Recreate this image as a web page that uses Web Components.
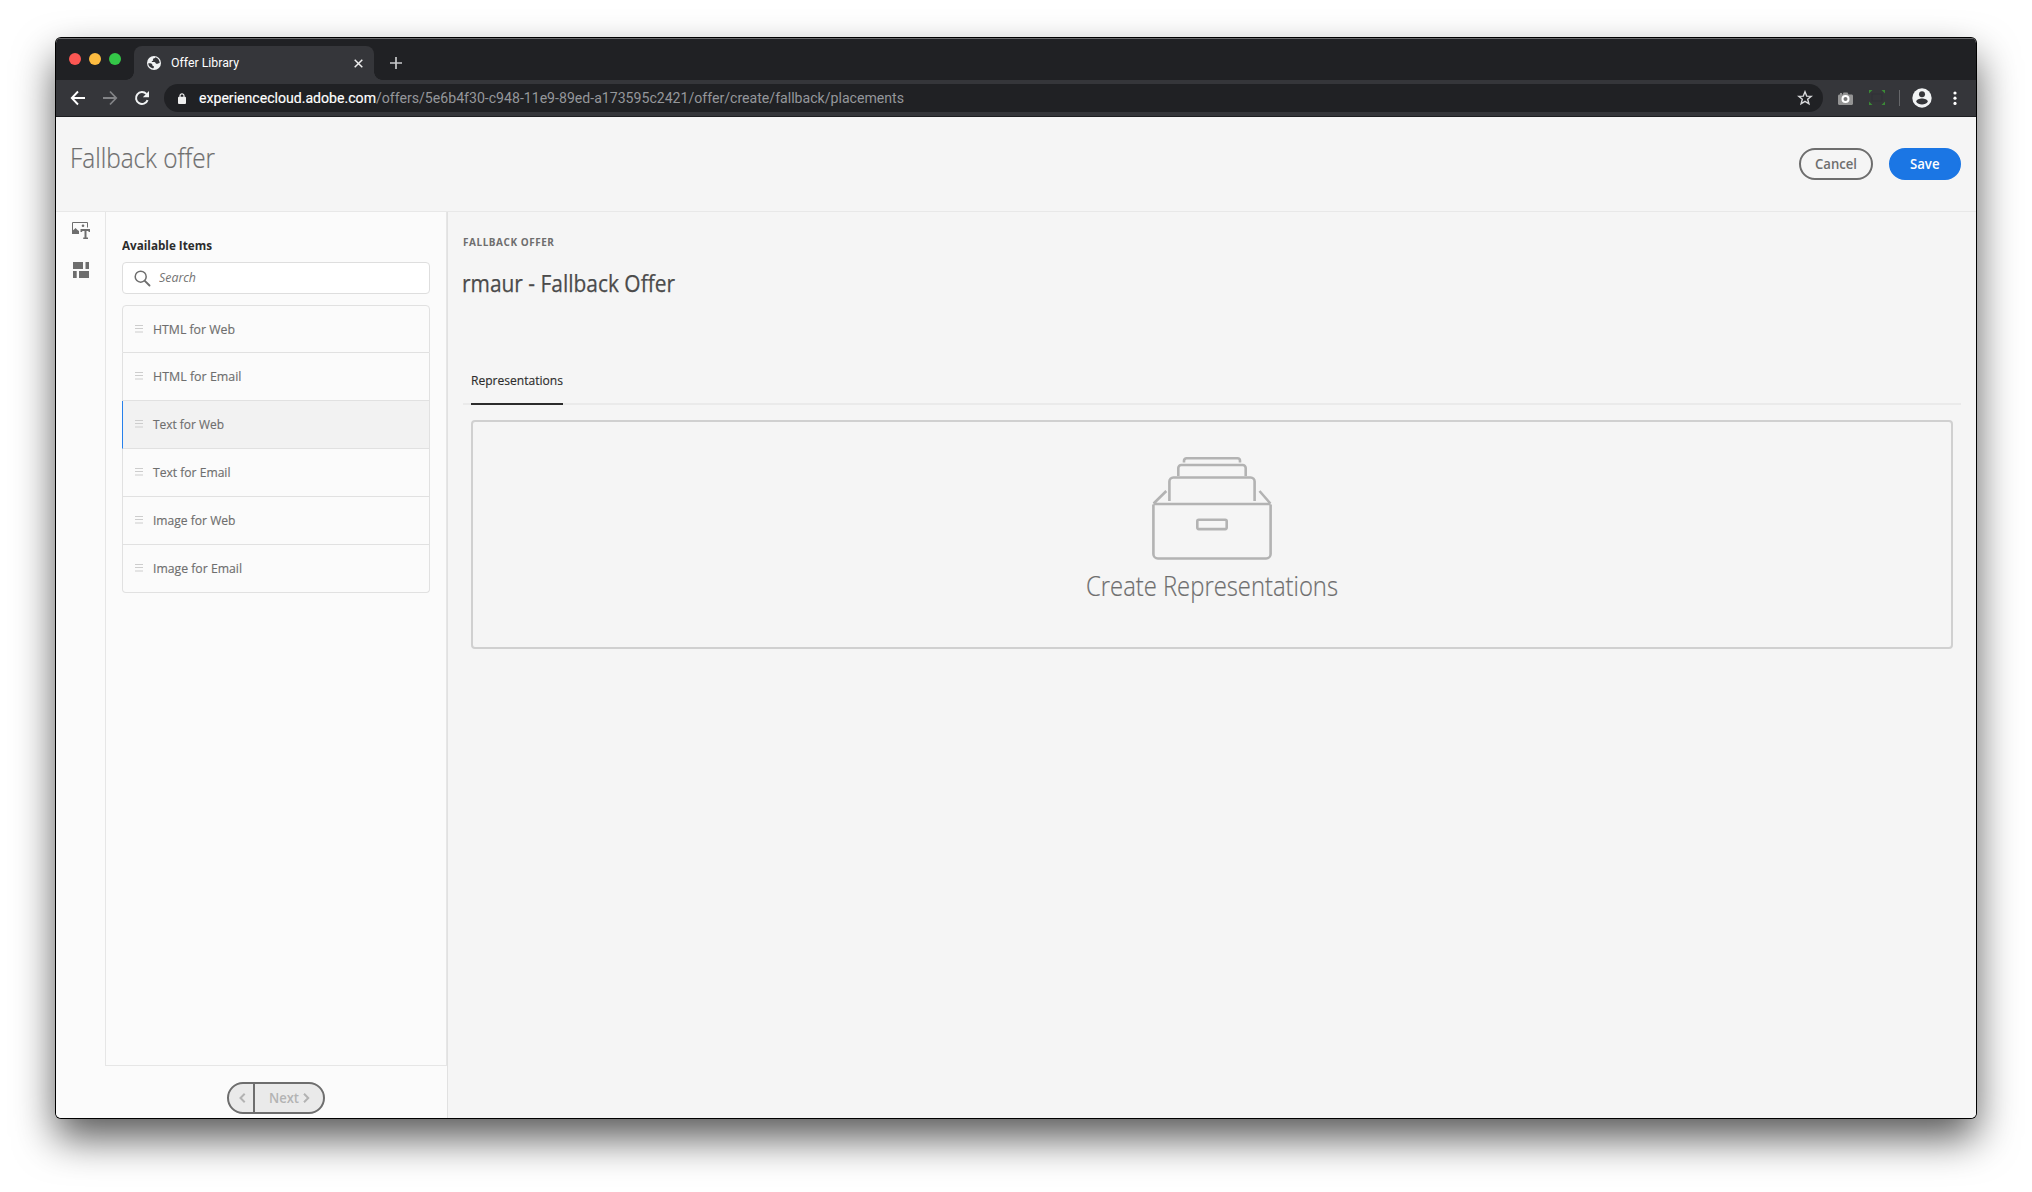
<!DOCTYPE html>
<html lang="en">
<head>
<meta charset="utf-8">
<title>Offer Library</title>
<style>
html,body{margin:0;height:100%;background:#fff;overflow:hidden}
body{font-family:"Open Sans","Noto Sans",sans-serif;font-size:13px;color:#6e6e6e}
</style>
</head>
<body>
<app-window>
  <browser-chrome slot="chrome"></browser-chrome>
  <offer-page></offer-page>
</app-window>
<script>
const define = (name, html, setup) => customElements.define(name, class extends HTMLElement {
  constructor() {
    super();
    const t = document.createElement('template');
    t.innerHTML = html;
    this.attachShadow({mode: 'open'}).append(t.content.cloneNode(true));
  }
  connectedCallback() { if (setup) setup.call(this, this.shadowRoot); }
});

/* One line of text condensed to an exact advance width. */
define('fit-text', `<style>
:host{display:block;flex:none;white-space:nowrap;line-height:20px}
span{display:inline-block;transform-origin:0 50%}
</style><span><slot></slot></span>`, function (root) {
  const w = +this.getAttribute('w');
  const s = root.querySelector('span');
  this.style.width = w + 'px';
  s.style.transform = `scaleX(${w / s.getBoundingClientRect().width})`;
});

define('drag-handle', `<style>:host{display:block;width:8px;height:8px}svg{display:block}</style>
<svg width="8" height="8"><path d="M0 .5h8M0 3.500h8M0 7h8" stroke="#cdcdcd" stroke-width="1.200"/></svg>`);

customElements.define('placement-item', class extends HTMLElement {
  connectedCallback() {
    const root = this.attachShadow({mode: 'open'});
    root.innerHTML = `<style>
:host{display:flex;align-items:center;box-sizing:border-box;height:48px;padding:0 0 2px 12px;gap:10px;border:1px solid #e1e1e1;border-top:0}
:host([first]){padding-bottom:0;border-top:1px solid #e1e1e1;border-radius:4px 4px 0 0}
:host([last]){border-radius:0 0 4px 4px}
:host([selected]){background:#f2f2f2;border-left-color:#2680eb}
fit-text{-webkit-text-stroke:.15px}
</style><drag-handle></drag-handle><fit-text w="${this.getAttribute('w')}">${this.getAttribute('label')}</fit-text>`;
  }
});

define('app-window', `<style>
:host{display:flex;flex-direction:column;width:1920px;height:1080px;margin:38px 56px;border-radius:5px;background:#f5f5f5;
 box-shadow:0 0 0 1px #000,0 20px 40px rgba(0,0,0,.66)}
.clip{display:flex;flex-direction:column;height:1080px;border-radius:5px;overflow:hidden}
</style><div class="clip"><slot name="chrome"></slot><slot></slot></div>`);

define('browser-chrome', `<style>
:host{display:block;height:79px;background:#202124;color:#fff;font-family:Roboto,Inter,sans-serif}
svg{display:block;flex:none}
.strip{display:flex;height:42px;box-sizing:border-box;box-shadow:inset 0 1px #6b6b6d}
.lights{display:flex;gap:8px;padding:15px 0 0 13px;width:65px}
.lights i{width:12px;height:12px;border-radius:50%}
.tab{display:flex;align-items:center;box-sizing:border-box;width:240px;height:34px;margin-top:8px;background:#35363a;border-radius:8px 8px 0 0;padding:0 11.500px 0 13px;position:relative}
.tab:before,.tab:after{content:"";position:absolute;bottom:0;width:8px;height:8px}
.tab:before{left:-8px;background:radial-gradient(circle at 0 0,transparent 7.5px,#35363a 8px)}
.tab:after{right:-8px;background:radial-gradient(circle at 100% 0,transparent 7.5px,#35363a 8px)}
.tab fit-text{margin-left:9.500px;font-size:12px}
.x{margin-left:auto}
.plus{margin:19px 0 0 16px}
.bar{display:flex;align-items:center;height:37px;box-sizing:border-box;background:#35363a;border-bottom:1px solid #1d1e21;padding-left:14px}
.nav{display:flex;gap:16px;width:94px}
.url{display:flex;align-items:center;width:1659px;height:28px;box-sizing:border-box;border-radius:14px;background:#202124;padding:0 10px 0 14px;font-size:14px}
.url .d{margin-left:12.500px;-webkit-text-stroke:.15px}
.url .p{color:#95979b}
.url svg:last-child{margin-left:auto}
.sep{width:1px;height:16px;background:#66676a;margin:0 12px 0 14px}
</style>
<div class="strip">
 <div class="lights"><i style="background:#fc5753"></i><i style="background:#fdbc40"></i><i style="background:#34c748"></i></div>
 <div class="tab">
  <svg width="14" height="14" viewBox="0 0 14 14"><circle cx="7" cy="7" r="7" fill="#f1f3f4"/><path d="M1.300 7.200c1 .1 2.900-.1 3.700.7.600.7 0 1.500.8 1.900.8.300 1.300.7 1.100 1.500-.1.400-.300.700-.500 1C3.500 12 1.300 9.900 1.300 7.200zM8.300 1.300c-.1 1-.8 1.100-1.700 1.200-.9.200-.8 1.100-.4 1.500.3.400-.3.900-.9.900-.8.100-.7 1 .1 1.100 1.100.1 2.700-.1 3.200.9.300.8 1.100.9 2 .8.800-.1 1.400-.5 2.100-.6C12.600 4.200 10.900 1.900 8.300 1.300z" fill="#35363a"/></svg>
  <fit-text w="68">Offer Library</fit-text>
  <svg class="x" width="9" height="9" viewBox="0 0 9 9"><path d="M.7.7l7.600 7.600M8.300.7L.7 8.300" stroke="#eee" stroke-width="1.500"/></svg>
 </div>
 <svg class="plus" width="12" height="12" viewBox="0 0 12 12"><path d="M6 0v12M0 6h12" stroke="#c8c9cb" stroke-width="1.700"/></svg>
</div>
<div class="bar">
 <div class="nav">
  <svg width="16" height="16" viewBox="0 0 16 16"><path d="M15 8H2.200M8 1.500L1.800 8 8 14.500" fill="none" stroke="#fff" stroke-width="1.900"/></svg>
  <svg width="16" height="16" viewBox="0 0 16 16"><path d="M1 8h12.800M8 1.500L14.200 8 8 14.500" fill="none" stroke="#828386" stroke-width="1.800"/></svg>
  <svg width="16" height="16" viewBox="0 0 16 16"><path d="M13.600 10.200A6 6 0 1 1 12.400 3.900" fill="none" stroke="#f1f3f4" stroke-width="2"/><path d="M15 1v6.200H8.800z" fill="#f1f3f4"/></svg>
 </div>
 <div class="url">
  <svg width="8" height="11" viewBox="0 0 8 11"><rect y="3.800" width="8" height="7.200" rx="1" fill="#eee"/><path d="M2 4.500V2.800a2 2 0 0 1 4 0v1.700" fill="none" stroke="#eee" stroke-width="1.200"/></svg>
  <fit-text class="d" w="177">experiencecloud.adobe.com</fit-text><fit-text class="p" w="528">/offers/5e6b4f30-c948-11e9-89ed-a173595c2421/offer/create/fallback/placements</fit-text>
  <svg width="16" height="16" viewBox="0 0 16 16"><path d="M8 1.800l1.700 4.300 4.500.3-3.500 2.900 1.200 4.500L8 11.300l-3.900 2.500 1.200-4.500-3.500-2.900 4.500-.3z" fill="none" stroke="#d6d7d9" stroke-width="1.400"/></svg>
 </div>
 <svg width="15" height="13" viewBox="0 0 15 13" style="margin:1px 0 0 14.500px"><path d="M1.500 2.500H2V1h2v1.500h.7L5.500.500h4l1 2h3c.900 0 1.500.6 1.500 1.400v7.600c0 .900-.6 1.500-1.500 1.500h-12C.6 13 0 12.400 0 11.500V4c0-.9.6-1.500 1.500-1.500z" fill="#949494"/><circle cx="7.500" cy="7" r="3" fill="#777" stroke="#fff" stroke-width="2"/></svg>
 <svg width="16" height="15" viewBox="0 0 16 15" style="margin:0 0 1px 16.500px"><rect x="3" y="4" width="10" height="7" fill="none" stroke="#303136"/><path d="M0 0h3.500L0 3.500zM16 0v3.500L12.500 0zM0 15v-3.500L3.500 15zM16 15h-3.500l3.500-3.500z" fill="#3b8a36"/></svg>
 <div class="sep"></div>
 <svg width="20" height="20" viewBox="0 0 20 20"><circle cx="10" cy="10" r="9.700" fill="#f1f3f4"/><circle cx="10" cy="6.300" r="3" fill="#35363a"/><path d="M4.200 13.800c0-2 3.400-3.200 5.800-3.200s5.800 1.200 5.800 3.200c-1.200 1.700-3.300 2.700-5.800 2.700s-4.600-1-5.800-2.700z" fill="#35363a"/></svg>
 <svg width="4" height="14" viewBox="0 0 4 14" style="margin-left:20.500px"><circle cx="2" cy="2" r="1.600" fill="#fff"/><circle cx="2" cy="7.200" r="1.600" fill="#fff"/><circle cx="2" cy="12.400" r="1.600" fill="#fff"/></svg>
</div>`);

define('pill-button', `<style>
:host{display:flex;align-items:center;justify-content:center;box-sizing:border-box;height:32px;width:74px;border:2px solid #6e6e6e;border-radius:16px;color:#6e6e6e;font-weight:600;font-size:14px}
:host([cta]){width:72px;background:#1b76e4;border-color:#1b76e4;color:#fff}
</style><slot></slot>`);

define('page-header', `<style>
:host{display:flex;box-sizing:border-box;height:95px;border-bottom:1px solid #e8e8e8;padding:23px 15px 0 14px}
fit-text.t{font-size:27px;font-weight:300;line-height:36px;-webkit-text-stroke:.2px}
.a{display:flex;gap:16px;margin:8px 0 0 auto}
</style>
<fit-text class="t" w="145">Fallback offer</fit-text>
<div class="a"><pill-button><fit-text w="42">Cancel</fit-text></pill-button><pill-button cta><fit-text w="29.500">Save</fit-text></pill-button></div>`);

define('icon-rail', `<style>:host{display:flex;flex-direction:column;width:33px;padding:10px 0 0 16px;gap:22px}svg{display:block}</style>
<svg width="18" height="18" viewBox="0 0 18 18"><path d="M.5 12V.500h15v5" fill="none" stroke="#6e6e6e"/><path d="M0 12V9l2-1.500 1.500-1.500L5.500 8l1.500 1v3z" fill="#6e6e6e"/><circle cx="11" cy="3.800" r="1.300" fill="#6e6e6e"/><path d="M8.500 7H18v3h-1.500V9h-2v6.500H16V17h-4.800v-1.500h1.300V9h-2.300v1H8.500z" fill="#6e6e6e"/></svg>
<svg width="18" height="18" viewBox="0 0 18 18"><path d="M1 0h10v7H1zM13.500 0H17v7h-3.500zM1 9h3.700v7H1zM7 9h10v7H7z" fill="#6e6e6e"/></svg>`);

define('items-panel', `<style>
:host{display:block;box-sizing:border-box;width:342px;height:854px;border:1px solid #e6e6e6;border-top:0;padding:23px 16px 0}
.h{font-weight:700;color:#2c2c2c;line-height:20px}
.s{display:flex;align-items:flex-start;box-sizing:border-box;height:32px;margin:7px 0 11px;border:1px solid #dedede;border-radius:4px;background:#fff;padding:7px 0 0 11px;gap:8px}
.s fit-text{font-style:italic;line-height:14px;color:#747474}
svg{display:block}
</style>
<fit-text class="h" w="90">Available Items</fit-text>
<div class="s"><svg width="17" height="17" viewBox="0 0 17 17"><circle cx="6.700" cy="6.700" r="5.500" fill="none" stroke="#6e6e6e" stroke-width="1.500"/><path d="M10.800 10.800l4.700 4.700" stroke="#6e6e6e" stroke-width="1.900" stroke-linecap="round"/></svg><fit-text w="37">Search</fit-text></div>
<placement-item first label="HTML for Web" w="82"></placement-item>
<placement-item label="HTML for Email" w="88.500"></placement-item>
<placement-item selected label="Text for Web" w="71"></placement-item>
<placement-item label="Text for Email" w="77.500"></placement-item>
<placement-item label="Image for Web" w="82.500"></placement-item>
<placement-item last label="Image for Email" w="89"></placement-item>`);

define('pager-buttons', `<style>
:host{display:flex;box-sizing:border-box;width:98px;height:32px;border:2px solid #6e6e6e;border-radius:16px;background:#eaeaea;color:#b3b3b3;font-weight:600;font-size:14px;margin:16px 0 0 171px;overflow:hidden}
.p{display:flex;align-items:center;box-sizing:border-box;width:26px;padding-left:9.500px;border-right:2px solid #6e6e6e}
.n{display:flex;align-items:center;padding:0 0 1px 13.500px;gap:4px}
svg{display:block}
</style>
<div class="p"><svg width="7" height="10" viewBox="0 0 7 10"><path d="M5.700 .800L1.500 5l4.200 4.200" fill="none" stroke="#b3b3b3" stroke-width="2"/></svg></div>
<div class="n"><fit-text w="30">Next</fit-text><svg width="7" height="10" viewBox="0 0 7 10"><path d="M1 .800L5.200 5 1 9.200" fill="none" stroke="#b3b3b3" stroke-width="2"/></svg></div>`);

define('empty-drop', `<style>
:host{display:flex;flex-direction:column;align-items:center;box-sizing:border-box;height:229px;margin:15px 8px 0 8px;border:2px solid #d0d0d0;border-radius:4px;padding-top:35px}
svg{display:block}
fit-text{margin-top:7px;font-size:27px;font-weight:300;line-height:36px;-webkit-text-stroke:.2px}
</style>
<svg width="122" height="104" viewBox="-1 0 122 104" fill="none" stroke="#b3b3b3" stroke-width="2.600">
<path d="M1.400 47.500V97a4.500 4.500 0 0 0 4.500 4.500h108.200a4.500 4.500 0 0 0 4.500-4.500V47.500M1.400 47h117.200M1.600 46.500L14.300 34M118.400 46.500L107.500 34"/>
<path d="M17.400 44V24.500a4 4 0 0 1 4-4h77.200a4 4 0 0 1 4 4V44"/>
<path d="M26.300 19V11a3 3 0 0 1 3-3h61.400a3 3 0 0 1 3 3v8"/>
<path d="M32 5.500V3.800A2.500 2.500 0 0 1 34.500 1.300h51A2.500 2.500 0 0 1 88 3.800v1.700"/>
<rect x="45.300" y="62.800" width="29.400" height="9.300" rx="1.500"/></svg>
<fit-text w="252">Create Representations</fit-text>`);

define('offer-main', `<style>
:host{display:block;flex:1;padding:22px 15px 0 15px;background:#f5f5f5}
.e{font-size:11px;font-weight:700;line-height:16px;letter-spacing:.6px}
.t{font-size:23px;line-height:30px;margin:18px 0 0 -1px;color:#4b4b4b;-webkit-text-stroke:.25px}
.tabs{display:flex;height:35px;margin-top:72px;padding-left:8px;box-shadow:inset 0 -2px #eaeaea}
.tab{box-sizing:border-box;height:35px;width:92px;border-bottom:2px solid #2c2c2c;color:#2c2c2c;-webkit-text-stroke:.15px}
</style>
<fit-text class="e" w="91.500">FALLBACK OFFER</fit-text>
<fit-text class="t" w="213">rmaur - Fallback Offer</fit-text>
<div class="tabs"><div class="tab"><fit-text w="92">Representations</fit-text></div></div>
<empty-drop></empty-drop>`);

define('offer-page', `<style>
:host{display:flex;flex-direction:column;height:1001px}
.b{display:flex;height:906px}
.side{box-sizing:border-box;width:392px;background:#fbfbfb;border-right:1px solid #e1e1e1}
.top{display:flex}
</style>
<page-header></page-header>
<div class="b"><div class="side"><div class="top"><icon-rail></icon-rail><items-panel></items-panel></div><pager-buttons></pager-buttons></div><offer-main></offer-main></div>`);
</script>
</body>
</html>
